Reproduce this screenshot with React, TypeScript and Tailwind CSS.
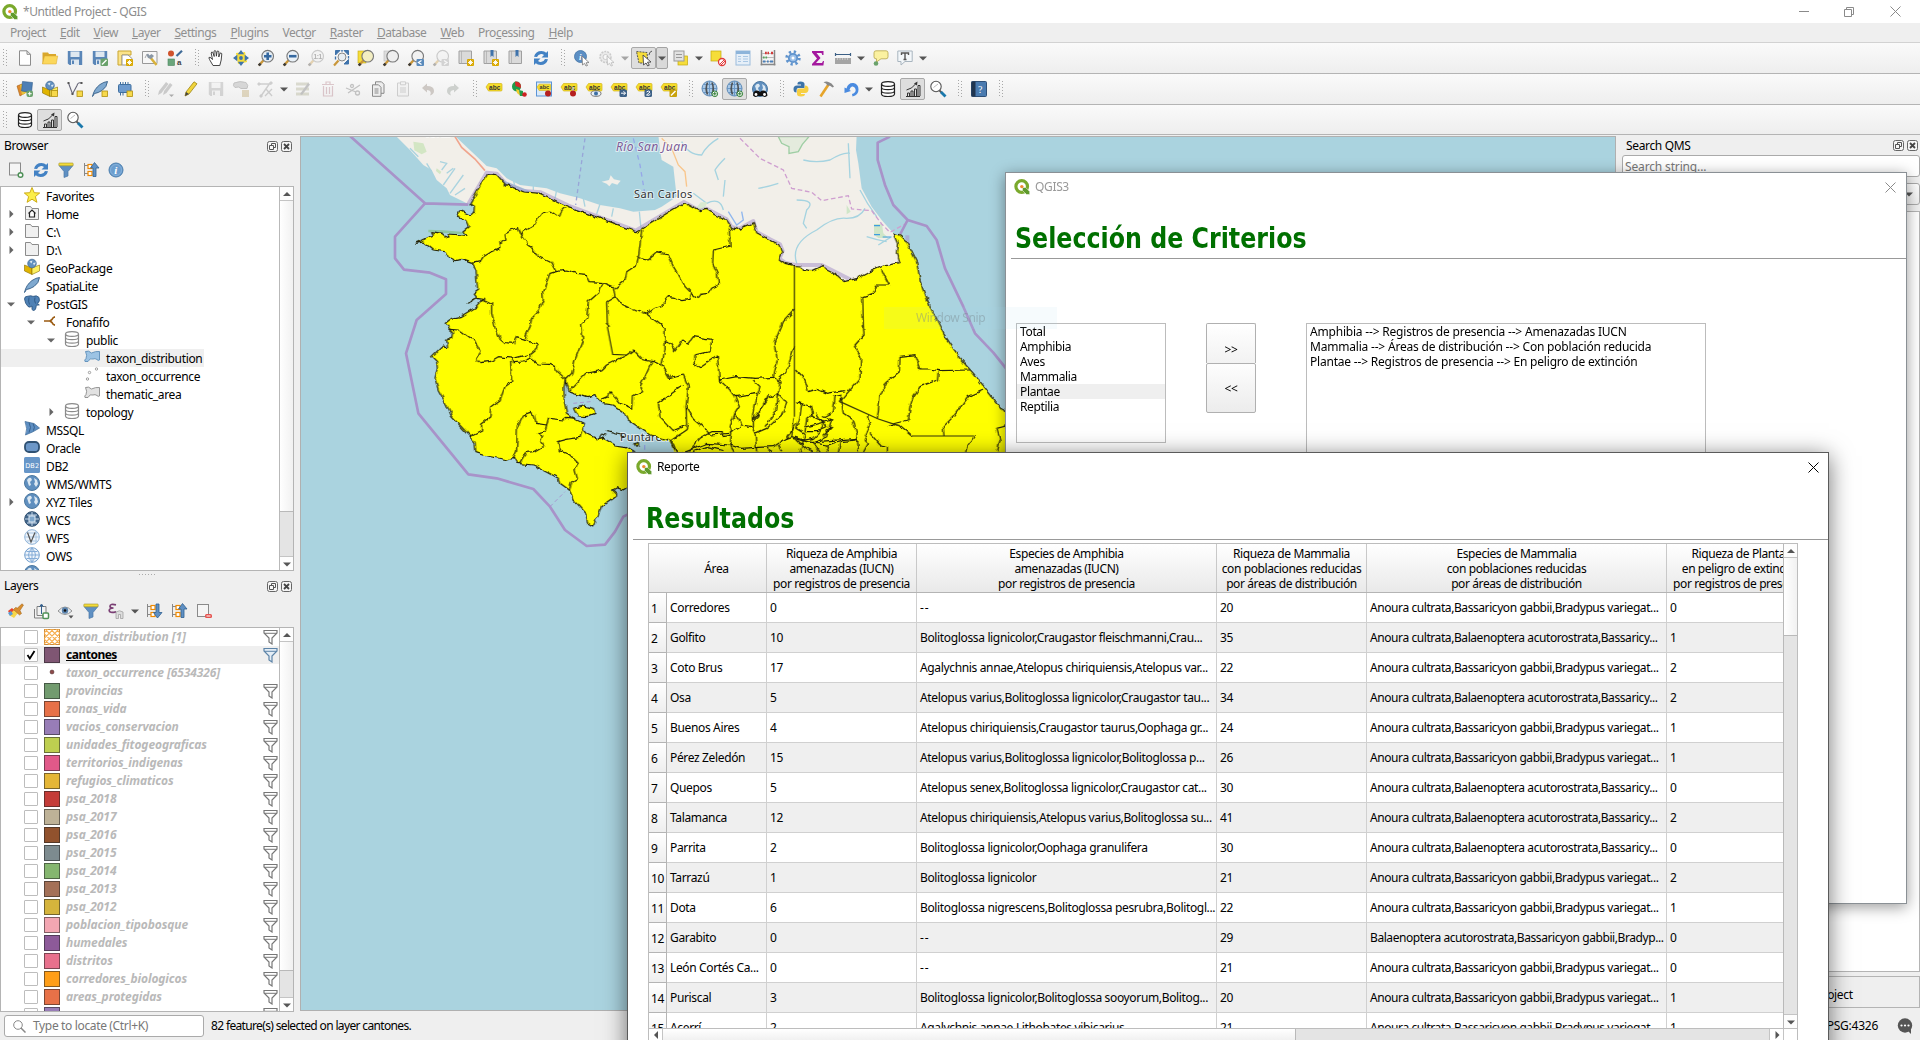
import React from "react";

type IconMap = Record<string, React.ReactNode>;

const badge = (x = 9, y = 9) => (
  <g transform={`translate(${x} ${y})`}>
    <rect width="7" height="7" rx="1" fill="#d9a800" />
    <path d="M3.5 1v5M1 3.5h5M1.8 1.8l3.4 3.4M5.2 1.8L1.8 5.2" stroke="#fff" strokeWidth=".9" />
  </g>
);
const lens = (fill: string, stroke = "#777") => (
  <>
    <path d="M.8 15.5l4.500-5" stroke="#c9973a" strokeWidth="2.4" />
    <path d="M.8 15.5l1.800-2" stroke="#3a3a3a" strokeWidth="2.6" />
    <circle cx="9.700" cy="6.200" r="5.800" fill={fill} stroke={stroke} strokeWidth="1.1" />
  </>
);
const tag = (
  <>
    <path d="M0 6l2.500-3.500H15q1 0 1 1v5.500q0 1-1 1H2.500z" fill="#f6dd2a" stroke="#d2b318" strokeWidth=".7" />
    <text x="3" y="8.600" fontSize="6.500" fontWeight="700" fill="#333" fontFamily="Liberation Sans" textLength="11">abc</text>
  </>
);
const globe = (
  <>
    <circle cx="8" cy="8" r="7.500" fill="#5f8fbf" stroke="#4c789f" />
    <path d="M3 5q2-3 4-2l1 2-2 2 1 3-2 1zM10 3l3 2 1 4-2 3-2-3 1-2z" fill="#dbe8f2" />
  </>
);
const gridGlobe = (
  <>
    <circle cx="7.500" cy="7.500" r="7.500" fill="#a9c9e8" stroke="#5d89b5" />
    <path d="M0 7.500h15M2 3.500h11M2 11.500h11M7.500 0v15" stroke="#6b98c6" fill="none" />
    <path d="M5.500 1.500q-2.500 6 0 12M10 1.500q2.500 6 0 12" stroke="#4d5257" strokeWidth="1.700" fill="none" />
  </>
);
const folder = <path d="M1.500 14.500v-13h5l1.500 2h6.500v11z" fill="#f0f0f0" stroke="#8b8b8b" />;
const cylinder = (c: string) => (
  <g fill="#fff" stroke={c} strokeWidth="1.2">
    <path d="M1.500 3v10q0 2.500 6.500 2.500t6.500-2.500V3" />
    <path d="M1.500 6.500q0 2.200 6.500 2.200t6.500-2.200M1.500 10q0 2.200 6.500 2.200t6.500-2.200" fill="none" />
    <ellipse cx="8" cy="3" rx="6.500" ry="2.400" />
  </g>
);
const redo = (c: string) => (
  <path d="M1 6.800Q2.500 1 8.500 1q3 0 4.700 1.800L15 1v6.500H8.500L11 5Q9.500 3.800 8 4 5 4.300 4 7zM15 9.200Q13.500 15 7.500 15q-3 0-4.700-1.800L1 15V8.500h6.500L5 11q1.500 1.200 3 1 3-.300 4-3z" fill={c} />
);
const save = (c: string, l: string) => (
  <>
    <path d="M.800 1h14.400v14H2.500L.800 13.500z" fill={c} />
    <rect x="3.500" y="1.500" width="9" height="5.500" fill={l} />
    <rect x="4" y="9.500" width="8" height="5.500" fill={l} />
    <rect x="5" y="10.500" width="2" height="3.500" fill={c} />
  </>
);
const quill = (
  <path d="M.5 15.500Q2 8 8 3.500 12 .8 15.500.500 15 6 10 9.500 6 12 2.500 12.500z" fill="#7fa9d0" stroke="#365f88" strokeWidth=".9" />
);
const box = (
  <>
    <path d="M.500 6l7.500 3v6.500L.500 12z" fill="#e0b400" stroke="#8a6d00" strokeWidth=".6" />
    <path d="M15.500 6L8 9v6.500l7.500-3.500z" fill="#fcf060" stroke="#8a6d00" strokeWidth=".6" />
    <circle cx="8" cy="4.500" r="4.300" fill="#5f8fbf" stroke="#3c6590" strokeWidth=".7" />
    <path d="M5.500 2.500l3-1-1 3zM9 4l3-.5-2 3z" fill="#dbe8f2" />
  </>
);
const poly = (f: string, s: string) => (
  <path d="M1.500 2.500q3-1.500 6 1.500 4-2 8-1.500v8.500q-1.500 1-2.500-.5-2-1.500-4-.5-3-1.500-5 2.500H1q-1-1.500 1-3 1.500-3-.500-7z" fill={f} stroke={s} strokeWidth=".9" />
);
const tree = (up: boolean) => (
  <>
    <path d="M1.500 1v13M1.500 3.500H6M1.500 11.500H6" stroke="#888" fill="none" />
    <rect x="5" y="2.500" width="4" height="4" fill="#fff" stroke="#f08a00" strokeWidth="1.200" />
    <rect x="5" y="9.500" width="4" height="4" fill="#fff" stroke="#f08a00" strokeWidth="1.200" />
    {up ? (
      <path d="M11.500.500L16 6h-3v8.500h-3V6H7.500z" fill="#5f90c3" stroke="#2f5f92" strokeWidth=".8" />
    ) : (
      <path d="M11.500 15L16 9.500h-3V1h-3v8.500H7.500z" fill="#5f90c3" stroke="#2f5f92" strokeWidth=".8" />
    )}
  </>
);
const pointer = <path d="M8 6l7 6.500-3 .3 1.500 2.700-1.500.5-1.500-2.700L8.500 15z" fill="#fff" stroke="#777" strokeWidth=".8" />;
const funnelBlue = (
  <>
    <path d="M1 3.500l5 6v6l4-1.500V9.500l5-6z" fill="#5f90c3" stroke="#4a78a8" strokeWidth=".7" />
    <rect x=".8" y="1" width="14.400" height="2.800" rx=".8" fill="#f3dc3a" stroke="#a3922c" strokeWidth=".6" />
  </>
);
const pad = (
  <>
    <path d="M1 1h12.500v12.500H1z" fill="#dadada" stroke="#a0a0a0" />
    <path d="M3.500 1v12.500" stroke="#aaa" strokeWidth=".7" />
  </>
);

const ICONS: IconMap = {
  newfile: <path d="M2.500.8h7.500l3.500 3.500v11h-11zM10 .8v3.500h3.500" fill="#fff" stroke="#8c8c8c" />,
  open: (
    <>
      <path d="M.500 2.500h5.500l1 1.500h7V14H.500z" fill="#d9a72c" />
      <path d="M.500 14l2-8h13.200l-1.500 8z" fill="#fbd75b" stroke="#d9a72c" strokeWidth=".5" />
    </>
  ),
  save: save("#5a86b8", "#dfe8f0"),
  saveas: (
    <>
      {save("#5a86b8", "#dfe8f0")}
      <rect x="8.500" y="8.500" width="7.500" height="7.500" rx="1" fill="#6aa26b" />
      <path d="M10 14.500l4.500-4.500" stroke="#fff" strokeWidth="1.400" />
    </>
  ),
  layout: (
    <>
      <path d="M1 1h13v4H5v10H1z" fill="#fbe38a" stroke="#c9a52e" />
      <path d="M5 5h6l4 3.500V15H5z" fill="#fff" stroke="#999" />
      {badge()}
    </>
  ),
  layoutmgr: (
    <>
      <path d="M.500 1.500h14.500v12H.500z" fill="#f7f7f7" stroke="#999" />
      <path d="M3 8l2-4 3 4" stroke="#aaa" fill="none" />
      <path d="M8 7l6.500 8" stroke="#d9b23a" strokeWidth="2.400" fill="none" />
      <path d="M6 3.500l1.500 2 2-1.500 2.500 2L9 9 6 8 4.500 5z" fill="#8a97a5" />
    </>
  ),
  style: (
    <>
      <circle cx="4" cy="3.500" r="3" fill="#d0532c" />
      <path d="M9.500 6L15 .8" stroke="#3f6b97" strokeWidth="2.200" />
      <rect x="1" y="9" width="6.500" height="6.500" fill="#6aa57b" stroke="#4b8560" strokeWidth=".6" />
      <text x="10" y="15" fontSize="8" fontWeight="700" fill="#444" fontFamily="Liberation Sans">a</text>
    </>
  ),
  pan: (
    <path d="M5 15.500L1.500 9.500Q0 7 2 7.200L4.500 9.500 3.200 3q.3-1.600 1.600-.6L6.200 6.500 6 1.200q.9-1.300 1.900 0l.5 5 .6-4.700q1-1.300 1.900.2l-.1 5.300 1.200-3.700q1.300-1 1.800.5L13.200 10l-1.400 5.500z" fill="#fff" stroke="#333" strokeWidth=".9" />
  ),
  pansel: (
    <>
      <path d="M3 3l9-1 2 10-9 2z" fill="#f6dd3a" />
      <path d="M8 0l3.200 4.300H4.800zM8 16l3.200-4.300H4.800zM0 8l4.300-3.200v6.400zM16 8l-4.300-3.200v6.400z" fill="#3f73ab" />
      <circle cx="8" cy="8" r="1.900" fill="#3f73ab" />
    </>
  ),
  zoomin: (
    <>
      {lens("#e4ecf3")}
      <path d="M9.700 2.500v7.500M6 6.200h7.500" stroke="#3568a0" strokeWidth="2.600" />
    </>
  ),
  zoomout: (
    <>
      {lens("#eaf1f7")}
      <path d="M6 6.200h7.500" stroke="#3568a0" strokeWidth="2.600" />
    </>
  ),
  zoom11: (
    <g opacity=".35">
      {lens("#eee")}
      <text x="5.500" y="9" fontSize="6.500" fontFamily="Liberation Sans" fontWeight="700" fill="#333">1:1</text>
    </g>
  ),
  zoomfull: (
    <>
      <path d="M1 15.500l4.500-5" stroke="#c9973a" strokeWidth="2.200" />
      <circle cx="9" cy="7" r="4" fill="#e8eef3" stroke="#888" />
      <path d="M2.500.500h4.500l-4.500 4.500zM15.500.500H11l4.500 4.500zM15.500 14h-4.500l4.500-4.500z" fill="#3f73ab" stroke="#3f73ab" />
      <path d="M2.500 6.500v3M8 .800h2M15.500 6v2.500" stroke="#3f73ab" strokeWidth="1.300" />
    </>
  ),
  zoomsel: (
    <>
      <rect x="0" y="1" width="8" height="12" fill="#f6dd3a" stroke="#c4a90e" strokeWidth=".6" />
      {lens("#f3eec2")}
    </>
  ),
  zoomlayer: (
    <>
      <rect x="1" y="1" width="8" height="10" fill="#ddd" stroke="#bbb" strokeWidth=".6" />
      {lens("#eeeeee")}
    </>
  ),
  zoomlast: (
    <>
      {lens("#f1f1f1")}
      <rect x="8.500" y="9" width="7.500" height="7" rx="1" fill="#5a8abb" />
      <path d="M13.500 10.500l-3 2 3 2" stroke="#fff" strokeWidth="1.300" fill="none" />
    </>
  ),
  zoomnext: (
    <g opacity=".35">
      {lens("#f1f1f1")}
      <rect x="8.500" y="9" width="7.500" height="7" rx="1" fill="#999" />
      <path d="M11 10.500l3 2-3 2" stroke="#fff" strokeWidth="1.300" fill="none" />
    </g>
  ),
  newmap: (
    <>
      {pad}
      {badge()}
    </>
  ),
  newbm: (
    <>
      {pad}
      <path d="M7.500 0h3v7L9 5.500 7.500 7z" fill="#3f73ab" />
      {badge()}
    </>
  ),
  bm: (
    <>
      {pad}
      <path d="M7.500 0h3v7L9 5.500 7.500 7z" fill="#3f73ab" />
    </>
  ),
  refresh: redo("#4382c4"),
  identify: (
    <>
      <circle cx="6.500" cy="6.500" r="6" fill="#5c8fc4" stroke="#4374a6" strokeWidth=".8" />
      <text x="5" y="10" fontSize="9" fontWeight="700" fontStyle="italic" fontFamily="Liberation Serif" fill="#fff">i</text>
      {pointer}
    </>
  ),
  action: (
    <g opacity=".45">
      <circle cx="6.500" cy="7" r="5.500" fill="#ddd" stroke="#999" strokeDasharray="2 1" strokeWidth="1.500" />
      <circle cx="6.500" cy="7" r="2.500" fill="#fff" stroke="#999" />
      {pointer}
    </g>
  ),
  select: (
    <>
      <path d="M.500 1.500l10.500 1 1 10.500H3z" fill="#f6dd3a" stroke="#555" strokeDasharray="2 1" />
      <path d="M13 5q0-3 3-4" stroke="#555" fill="none" />
      <path d="M7 5l8 7-3.500.2 1.800 3-1.600.8-1.700-3L7.500 15z" fill="#fff" stroke="#444" strokeWidth=".9" />
    </>
  ),
  selform: (
    <>
      <rect x="5" y="6" width="9.500" height="9" fill="#f6dd3a" stroke="#c4a90e" strokeWidth=".7" />
      <rect x="1" y="1" width="10" height="10" fill="#e2e2e2" stroke="#999" />
      <path d="M3 4.500h6M3 7.500h6" stroke="#999" />
    </>
  ),
  desel: (
    <>
      <rect x="1" y="1" width="10" height="10" fill="#f6dd3a" stroke="#c4a90e" strokeWidth=".7" />
      <circle cx="12" cy="12" r="3.500" fill="#fff" stroke="#e03a3a" strokeWidth="1.300" />
      <path d="M9.700 14.300l4.600-4.600M11 15l4-4" stroke="#e03a3a" />
    </>
  ),
  table: (
    <>
      <rect x="1" y="1" width="14" height="14" fill="#e6eff8" stroke="#9bbcdc" />
      <rect x="1" y="1" width="14" height="3" fill="#8db4da" />
      <path d="M3 6.500h3M3 9h3M3 11.500h3M8 6.500h5M8 9h5M8 11.500h5" stroke="#a9c7e4" strokeWidth="1.200" />
    </>
  ),
  abacus: (
    <>
      <path d="M1.500 0v15.500M14.500 0v15.500M.500 14.500h15" stroke="#888" strokeWidth="1.500" />
      <path d="M2 3.500h12M2 7.500h12M2 11.500h12" stroke="#bbb" />
      <path d="M5 3h1.800M7.500 3h1.500M11 3h2" stroke="#d33b3b" strokeWidth="2.400" />
      <path d="M3 7.500h1.600M5.500 7.500h1.600" stroke="#58a55c" strokeWidth="2.200" />
      <path d="M3 11.500h2.500M7 11.500h1.700M10 11.500h3" stroke="#4a7fb8" strokeWidth="2.200" />
    </>
  ),
  gear: (
    <>
      <circle cx="8" cy="8" r="6.200" fill="none" stroke="#5f93cd" strokeWidth="3" strokeDasharray="2.200 2.670" />
      <circle cx="8" cy="8" r="4.200" fill="#9cc0e8" stroke="#5f93cd" strokeWidth="1.800" />
      <circle cx="8" cy="8" r="1.500" fill="#fff" />
    </>
  ),
  sigma: <path d="M2 1h11.500v4h-1.200L11.500 3H6.500l4 5-4.500 5h6l1-2H14l-.6 4.500H2V14l5-5.600L2 2.500z" fill="#a4189e" />,
  measure: (
    <>
      <path d="M0 4.500h16M.5 3v3M15.500 3v3" stroke="#3b5f85" strokeWidth="1.200" />
      <rect x="0" y="8" width="16" height="6" fill="#a5a5a5" />
      <path d="M2.500 8v2M5 8v2M7.500 8v2M10 8v2M12.500 8v2" stroke="#d5d5d5" strokeWidth=".7" />
    </>
  ),
  tip: (
    <>
      <path d="M4 .8h10q2 0 2 2v4q0 2-2 2H9L4.500 12V8.800H4q-2 0-2-2v-4q0-2 2-2z" fill="#fbf1a0" stroke="#b5a44a" strokeWidth=".8" />
      <circle cx="4" cy="13.500" r="2.300" fill="#6aa26b" />
    </>
  ),
  anno: (
    <>
      <path d="M.8 1h14.400v10.500H8L4 15v-3.500H.8z" fill="#f3f7fa" stroke="#a9b5bf" />
      <path d="M4.500 5V3h7v2M8 3v6.500M6.500 9.500h3" stroke="#555" strokeWidth="1.400" fill="none" />
    </>
  ),
  dsm: (
    <>
      <path d="M0 5l5-2 3 9-5 3z" fill="#e08a2c" stroke="#a25c12" strokeWidth=".6" />
      <path d="M3 4l6-2 2 9-6 3z" fill="#e8c23a" />
      <path d="M5.500.500l10 1-1 10-10-1.500z" fill="#4d7fb5" stroke="#2f5c8c" strokeWidth=".6" />
      <rect x="9.500" y="9.500" width="6.500" height="6.500" rx="2" fill="#6aa26b" />
      <path d="M12.700 10.800v3.900M10.800 12.700h3.900" stroke="#fff" />
    </>
  ),
  gpkg: (
    <>
      {box}
      <rect x="9.500" y="9.500" width="6" height="6" fill="#f7d94c" stroke="#b08f10" strokeWidth=".8" />
    </>
  ),
  shp: (
    <>
      <path d="M1.500 2l4 11L10 4.500q1-3.500 4-2.500" stroke="#667" fill="none" strokeWidth="1.100" />
      <path d="M.500 1h2v2h-2zM4.500 12h2v2h-2zM13.500 1h2v2h-2z" fill="#555" />
      <rect x="10" y="10" width="5.500" height="5.500" fill="#f7d94c" stroke="#b08f10" strokeWidth=".8" />
    </>
  ),
  spl: (
    <>
      {quill}
      <rect x="10" y="10" width="5.500" height="5.500" fill="#f7d94c" stroke="#b08f10" strokeWidth=".8" />
    </>
  ),
  mem: (
    <>
      <rect x="1.500" y="3.500" width="12.500" height="8" rx="1" fill="#6c9ace" stroke="#3f6f9f" />
      <path d="M3.500 1v2.500M6 1v2.500M8.500 1v2.500M11 1v2.500M3.500 12v2.500M6 12v2.500" stroke="#3f6f9f" />
      <rect x="10" y="10" width="5.500" height="5.500" fill="#f7d94c" stroke="#b08f10" strokeWidth=".8" />
    </>
  ),
  edits: (
    <g opacity=".45">
      <path d="M0 14l1-4 7-9 2.500 2-7 9zM5 14l1-4 6-8 2.500 2-6 8z" fill="#999" />
      <path d="M11 13.500h5L13.500 16z" fill="#555" />
    </g>
  ),
  pencil: (
    <>
      <path d="M2 15l1-4L11 .8l3 2L6 13z" fill="#f0d43c" stroke="#9d8516" strokeWidth=".8" />
      <path d="M2 15l1-4 3 2z" fill="#444" />
    </>
  ),
  savedis: <g opacity=".35">{save("#999", "#eee")}</g>,
  addpoly: (
    <g opacity=".4">
      <path d="M1 2q6-2.500 12-.5 3 3 1 6H8Q6 5 2 6.500-.500 5 1 2z" fill="#aaa" stroke="#777" />
      <path d="M9 9h7v7H9z" fill="#bfa870" />
    </g>
  ),
  vertex: (
    <g opacity=".3" stroke="#777" fill="none">
      <path d="M1 3h12M3 15L12 2M8 8l6 7M14 8l-7 7" strokeWidth="1.400" />
      <path d="M0 2h2v2H0zM12 1h2v2h-2zM2 14h2v2H2z" fill="#777" />
    </g>
  ),
  multi: (
    <g opacity=".45">
      <path d="M1 1.500h13v3H1zM1 6.500h13v3H1zM1 11.500h13v3H1z" fill="#b9b9a0" />
      <path d="M5 13l8-11 2 1.500-8 10.500z" fill="#888" />
    </g>
  ),
  trash: (
    <g opacity=".3" stroke="#a05a68" fill="none" strokeWidth="1.200">
      <path d="M2 3.500h12M6 3V1h4v2M3.500 5v10h9V5M6.500 6v7M9.500 6v7" />
    </g>
  ),
  cut: (
    <g opacity=".35" stroke="#666" fill="none" strokeWidth="1.300">
      <path d="M1 7l10 4M3 12L15 4" />
      <circle cx="12.500" cy="12" r="2" />
      <circle cx="7" cy="5" r="1.500" />
    </g>
  ),
  copy: (
    <g stroke="#8a8a8a" fill="#eee">
      <path d="M5.500.800h6l2.500 2.500v9H5.500z" />
      <path d="M2.500 3.800h6L11 6.300v9H2.500z" />
      <path d="M4.500 8h4M4.500 10h4M4.500 12h4" />
    </g>
  ),
  paste: (
    <g opacity=".35" stroke="#888" fill="#eee">
      <path d="M2.500 2h11v13h-11z" />
      <path d="M5.500.800h5v3h-5zM5 7h6M5 9h6M5 11h6" />
    </g>
  ),
  undo: <path d="M2 7l5-4.500V5q7 0 7 5 0 3-4 4.500 2.500-5-3-5.500v2.500z" fill="#cdc8c4" />,
  redo: <path d="M14 7L9 2.500V5q-7 0-7 5 0 3 4 4.500Q3.500 9.500 9 9v2.500z" fill="#cdd0cd" />,
  label: tag,
  diagram: (
    <>
      <ellipse cx="5.500" cy="5.500" rx="4.500" ry="5" fill="#1f9c4a" />
      <path d="M4 .500q6.500-.500 6 6.500L4.500 5z" fill="#d62828" />
      <path d="M5 8l3 1 1.500 6-3.500-3z" fill="#f1cc2c" />
      <path d="M8 9l4 1v5H9z" fill="#1f9c4a" />
      <circle cx="13.500" cy="13.500" r="2.300" fill="#c22" />
    </>
  ),
  labelpin: (
    <>
      <rect x=".500" y="1" width="15" height="14" fill="#dbe9f8" stroke="#5b94d6" />
      <g transform="translate(1 1) scale(.85)">{tag}</g>
      <circle cx="12" cy="12.500" r="3" fill="#b52020" />
    </>
  ),
  labelred: (
    <>
      {tag}
      <path d="M12 6v5" stroke="#ccc" strokeWidth="1.500" />
      <circle cx="12" cy="12.500" r="3" fill="#b52020" />
    </>
  ),
  labeleye: (
    <>
      {tag}
      <ellipse cx="10" cy="12.500" rx="5" ry="2.800" fill="#e8f0f8" stroke="#555" strokeWidth=".8" />
      <circle cx="10" cy="12.500" r="2" fill="#3c6ea5" />
    </>
  ),
  labelmove: (
    <>
      {tag}
      <rect x="8.500" y="8.500" width="7.500" height="7.500" rx="1.500" fill="#3d6187" />
      <path d="M10 12.200h4.500M12.500 10.200l2 2-2 2" stroke="#fff" fill="none" />
    </>
  ),
  labelrot: (
    <>
      {tag}
      <rect x="8.500" y="8.500" width="7.500" height="7.500" rx="1.500" fill="#3d6187" />
      <path d="M10.500 11q2-2 3.500 0l-3.500 3q3 1 4-1" stroke="#fff" fill="none" />
    </>
  ),
  labeledit: (
    <>
      {tag}
      <rect x="8.500" y="8.500" width="7.500" height="7.500" rx="1" fill="#c9a30e" />
      <path d="M10 14.500l4.500-4.500" stroke="#fff" strokeWidth="1.500" />
    </>
  ),
  qmsadd: (
    <>
      {gridGlobe}
      <circle cx="12.800" cy="12.800" r="2.800" fill="#fff" stroke="#2e7d32" />
      <path d="M12.800 11v3.600M11 12.800h3.600" stroke="#2e7d32" />
    </>
  ),
  qmssearch: (
    <>
      {globe}
      <path d="M1 14.500q0-5 4-5 2 0 3 1.500 1-1.500 3-1.500 4 0 4.500 5-2 2.500-5 .5H6q-3 2-5-.500z" fill="#111" />
      <circle cx="4" cy="13.500" r="1.400" fill="#fff" />
      <circle cx="12.500" cy="13.500" r="1.400" fill="#fff" />
    </>
  ),
  python: (
    <>
      <path d="M7.500.500q4 0 4 2.500v4H5Q3.500 7 3.500 9.500v2Q.500 11.500.500 8 .500 4.500 4 4.500h4v-1H4.500Q4 .500 7.500.500z" fill="#3c73a8" />
      <path d="M8 15.500q-4 0-4-2.500V9.500q0-2 2-2h4.500Q12 7.500 12 5v-.500q3.500 0 3.500 3.500 0 4-3.500 4H8v1h4q0 2.500-4 2.500z" fill="#f7cf42" />
    </>
  ),
  hammer: (
    <>
      <path d="M2.500 15.500L10.500 3.500" stroke="#e6a42a" strokeWidth="2.600" />
      <path d="M5.500 1.200q3-1.500 5.500 0l2.500 1.300 2.500 3-1.300 1L12 4.800 9.500 4.500 8 2.500z" fill="#888" />
    </>
  ),
  reload: (
    <path d="M1.500 12V6.500l2 1Q5 1.500 10.500 2q5 1 5 6.500 0 5.500-6 7l-.500-2.500q4.500-1.500 3.500-5Q11.500 5 9 5.500 7 6 6.500 9L8 10z" fill="#4a8be0" />
  ),
  db: cylinder("#222"),
  chart: (
    <>
      <path d="M1 15.500h14M2.500 15v-3h2v3M6 15v-5h2v5M9.500 15V8h2v7M13 15V4.500h2V15" stroke="#333" fill="none" />
      <path d="M1.500 9Q7 8 11 2.500" stroke="#333" fill="none" />
      <path d="M9 2.500l3.500-2-.5 4z" fill="#333" />
    </>
  ),
  glass: (
    <>
      <circle cx="6" cy="5.500" r="5.200" fill="#fff" stroke="#555" strokeWidth="1.100" />
      <path d="M9.500 9.500l2 2" stroke="#555" strokeWidth="1.800" />
      <path d="M11 11l4.500 4.500" stroke="#1a78ab" strokeWidth="2.800" />
      <path d="M3.500 6.500L8 3" stroke="#bbb" />
    </>
  ),
  help: (
    <>
      <rect x=".500" y=".500" width="15" height="15" rx="1" fill="#4a7bb0" stroke="#2e5078" />
      <rect x=".500" y=".500" width="4" height="15" fill="#1f3550" />
      <text x="7" y="12" fontSize="10" fontFamily="Liberation Serif" fill="#fff">?</text>
    </>
  ),
  additem: (
    <>
      <rect x="1.500" y="1" width="11" height="12" fill="#f5f5f5" stroke="#8a8a8a" />
      <circle cx="12.500" cy="13" r="2.300" fill="#fff" stroke="#4f9158" strokeWidth="1.500" />
    </>
  ),
  filter: funnelBlue,
  collapse: tree(true),
  expand: tree(false),
  info: (
    <>
      <circle cx="8" cy="8" r="7" fill="#6b9dce" stroke="#4b7eae" />
      <circle cx="8" cy="8" r="5.500" fill="none" stroke="#8fb8de" strokeWidth=".7" />
      <text x="6.200" y="12" fontSize="11" fontWeight="700" fontStyle="italic" fontFamily="Liberation Serif" fill="#fff">i</text>
    </>
  ),
  star: <path d="M8 .500l2.200 5.200 5.500.300-4.300 3.600 1.500 5.700L8 12.200l-4.900 3.100 1.500-5.700L.3 6l5.500-.300z" fill="#fbee4a" stroke="#c8a50a" strokeWidth=".9" />,
  home: (
    <>
      {folder}
      <path d="M4.500 8.500L8 5l3.500 3.500M5.500 8v4h5V8" stroke="#222" fill="#fff" strokeWidth="1.200" />
    </>
  ),
  folder,
  geopackage: box,
  quill,
  elephant: (
    <>
      <path d="M.500 4Q.500 1 4 1.200q3-1 5 .200 4-1.500 6 1 1.500 4-1.500 6l1.800 1.500-3 .300Q12 15.500 9.500 15.500q-2 0-1.500-4.500-2 2-4 .500Q1 8.500.500 4z" fill="#4f81b5" stroke="#27507c" strokeWidth=".8" />
      <path d="M5 2.500q-1 4 .500 7M11 2.500q-1 3 .500 6" stroke="#27507c" strokeWidth=".8" fill="none" />
    </>
  ),
  conn: <path d="M0 8h6M11 3.800Q9 4 8 6.500L6 8l2 1.500q1 2.500 3 2.700" stroke="#9a5a10" strokeWidth="1.700" fill="none" />,
  schema: cylinder("#8a8a8a"),
  polyblue: poly("#9cc3e4", "#5b8db9"),
  polygray: poly("#e2e2e2", "#8a8a8a"),
  points: (
    <g fill="#fff" stroke="#888" strokeWidth=".8">
      <circle cx="3.500" cy="12" r="1.200" />
      <circle cx="5.500" cy="5.500" r="1.200" />
      <circle cx="12.500" cy="2" r="1.200" />
    </g>
  ),
  mssql: (
    <>
      <path d="M1 .500l9 2 5.500 4.500q-6 4-14 7Q4 8 1 .500z" fill="#5d8ec2" stroke="#3c6a98" strokeWidth=".7" />
      <path d="M5 1.500q3 5 0 10M9 2.500q2.500 4 .500 7" stroke="#35618e" fill="none" />
    </>
  ),
  oracle: <rect x="1" y="3" width="14" height="10" rx="4" fill="#6c97c8" stroke="#2f5173" strokeWidth="1.800" />,
  db2: (
    <>
      <rect width="16" height="16" rx="1.500" fill="#6796c8" />
      <text x="1.200" y="10.500" fontSize="6.500" fontFamily="DejaVu Sans" fill="#fff" textLength="13.500">DB2</text>
    </>
  ),
  globe,
  wcs: (
    <>
      <circle cx="8" cy="8" r="7.300" fill="#41658a" stroke="#2e4e6f" />
      <path d="M8 1v14M1 8h14M3 4h10M3 12h10" stroke="#c5d8ea" />
      <rect x="5" y="5" width="6" height="6" fill="#7fa7cc" stroke="#dfeaf4" />
    </>
  ),
  wfs: (
    <>
      <circle cx="8" cy="8" r="7.300" fill="#eef4fb" stroke="#8fb3d8" />
      <path d="M1 8h14M3 4h10M3 12h10M12 2v12" stroke="#a9c6e2" />
      <path d="M3.500 3.500L7 13l4-9.500" stroke="#555" fill="none" strokeWidth="1.200" />
    </>
  ),
  ows: (
    <>
      <circle cx="8" cy="8" r="7.300" fill="#eef4fb" stroke="#6f9dcd" />
      <path d="M8 1v14M1 8h14M2.500 4.500h11M2.500 11.500h11M8 1q-7 7 0 14M8 1q7 7 0 14" stroke="#85add8" fill="none" />
    </>
  ),
  brush: (
    <>
      <path d="M0 8l4-3 3 3-4 5z" fill="#e8432c" />
      <path d="M1 12l5-5 4 3-4 5z" fill="#f7d64a" />
      <path d="M0 10l3-2 2 3-3 2z" fill="#5b9bd5" />
      <path d="M5.500 6.500l6 5.500 2-1.500-1.500-3L15.500 2 14 .800 9.500 5 7.500 4.500z" fill="#d88e2e" stroke="#9b5e14" strokeWidth=".5" />
    </>
  ),
  addgroup: (
    <>
      <path d="M1.500 6v9h9M4 3.500v9h9v-9z" stroke="#808080" fill="#f2f2f2" />
      <path d="M8.500 11V2M6.500 4l2-3 2 3" stroke="#35618e" fill="none" />
      <rect x="10" y="10" width="5.500" height="5.500" rx="1" fill="#fff" stroke="#4f9158" strokeWidth="1.500" />
    </>
  ),
  eye: (
    <>
      <path d="M0 8q7-8 14 0-7 7-14 0z" fill="#e9eef3" stroke="#888" strokeWidth=".9" />
      <circle cx="7" cy="7.500" r="3.200" fill="#5b83ad" />
      <circle cx="7" cy="7.500" r="1.300" fill="#111" />
      <path d="M10.500 12.500h5L13 15.500z" fill="#555" />
    </>
  ),
  epsilon: (
    <>
      <path d="M8 1.800Q2 .500 2 3.200q0 1.800 3.500 1.800Q1.200 5.200 1.200 7.500q0 2.800 6.800 1.300" stroke="#7a3f74" fill="none" strokeWidth="1.700" />
      <path d="M8 9q3.500-2.500 7 0v6.500h-2.500v-4h-2v4H8z" fill="#ddd" stroke="#999" strokeWidth=".7" />
    </>
  ),
  remove: (
    <>
      <rect x="1.500" y="1.500" width="11" height="12" fill="#f5f5f5" stroke="#8a8a8a" />
      <rect x="9" y="11" width="7" height="4" rx="1.500" fill="#e5534f" />
      <path d="M10.500 13h4" stroke="#fff" />
    </>
  ),
};

function Icon({ n, s = 16 }: { n: string; s?: number }) {
  return (
    <svg width={s} height={s} viewBox="0 0 16 16" className="block shrink-0 overflow-visible">
      {ICONS[n]}
    </svg>
  );
}

const Logo = () => (
  <svg width="16" height="16" viewBox="0 0 16 16" className="block shrink-0">
    <circle cx="7.700" cy="7.500" r="5.800" fill="none" stroke="#7aa92c" strokeWidth="3.200" />
    <path d="M8.500 8.500h3.200l4 4V15.500h-3.200l-4-4z" fill="#5f9a2c" stroke="#fff" strokeWidth=".5" />
    <circle cx="7.800" cy="7.600" r="1.700" fill="#ee8a2f" />
  </svg>
);

const Tri = ({ dir = "down", c = "#555" }: { dir?: "down" | "up" | "right" | "left"; c?: string }) => {
  const d = {
    down: "M0 2.500h8L4 6.500z",
    up: "M0 6h8L4 2z",
    right: "M2.500 0v8l4-4z",
    left: "M6 0v8L2 4z",
  }[dir];
  return (
    <svg width="8" height="8" viewBox="0 0 8 8" className="block shrink-0">
      <path d={d} fill={c} />
    </svg>
  );
};

const Grip = () => (
  <svg width="5" height="18" viewBox="0 0 5 18" className="mr-[3px] block shrink-0">
    <path d="M.500 0v18M3.500 1v18" stroke="#a8a8a8" strokeDasharray="1 2" />
  </svg>
);

function Strip({ items, h }: { items: string; h: string }) {
  return (
    <div className={`flex shrink-0 items-center border-b border-[#b4b4b4] bg-linear-to-b from-[#fafafa] to-[#eeeeee] ${h}`}>
      {items.split(" ").map((it, i) => {
        if (it === "|0") return <div key={i} className="flex w-3 shrink-0 justify-end pr-px"><Grip /></div>;
        if (it === "|") return <div key={i} className="flex w-4 shrink-0 justify-end"><Grip /></div>;
        if (it === "v") return <div key={i} className="flex w-3 shrink-0 justify-center"><Tri /></div>;
        if (it === "vd") return <div key={i} className="flex w-3 shrink-0 justify-center"><Tri c="#a5a5a5" /></div>;
        if (it === "V") return <div key={i} className="flex h-[22px] w-3 shrink-0 items-center justify-center rounded-[2px] border border-[#a3a3a3] bg-[#d9d9d9]"><Tri /></div>;
        if (it[0] === "*")
          return (
            <div key={i} className="flex h-[22px] w-[25px] shrink-0 items-center justify-center rounded-[2px] border border-[#a9a9a9] bg-[#dedede]">
              <Icon n={it.slice(1)} />
            </div>
          );
        return <div key={i} className="flex w-[25px] shrink-0 justify-center"><Icon n={it} /></div>;
      })}
    </div>
  );
}

const MENUS = ["Pro|j|ect", "|E|dit", "|V|iew", "|L|ayer", "|S|ettings", "|P|lugins", "Vect|o|r", "|R|aster", "|D|atabase", "|W|eb", "Pro|c|essing", "|H|elp"];

const DockButtons = () => (
  <div className="flex gap-[3px]">
    <svg width="11" height="11" viewBox="0 0 11 11">
      <rect x=".5" y=".5" width="10" height="10" rx="2" fill="#f5f5f5" stroke="#666" />
      <path d="M2.500 4.500h4v4h-4zM4.500 4v-1.500h4v4H7" stroke="#555" fill="none" />
    </svg>
    <svg width="11" height="11" viewBox="0 0 11 11">
      <rect x=".5" y=".5" width="10" height="10" rx="2" fill="#f5f5f5" stroke="#666" />
      <path d="M3 3l5 5M8 3L3 8" stroke="#444" strokeWidth="1.800" />
    </svg>
  </div>
);

function VBar({ thumb }: { thumb: string }) {
  return (
    <div className="flex w-[14px] shrink-0 flex-col border-l border-[#b9b9b9] bg-[#e4e4e4]">
      <div className="flex h-[14px] shrink-0 items-center justify-center border-b border-[#c4c4c4] bg-[#fdfdfd]"><Tri dir="up" /></div>
      <div className={`shrink-0 border-b border-[#b9b9b9] bg-linear-to-r from-white to-[#f1f1f1] ${thumb}`} />
      <div className="flex-1" />
      <div className="flex h-[14px] shrink-0 items-center justify-center border-t border-[#c4c4c4] bg-[#fdfdfd]"><Tri dir="down" /></div>
    </div>
  );
}

type Node = { t: string; ic: string; d?: number; a?: "right" | "down"; sel?: boolean };
const TREE: Node[] = [
  { t: "Favorites", ic: "star" },
  { t: "Home", ic: "home", a: "right" },
  { t: "C:\\", ic: "folder", a: "right" },
  { t: "D:\\", ic: "folder", a: "right" },
  { t: "GeoPackage", ic: "geopackage" },
  { t: "SpatiaLite", ic: "quill" },
  { t: "PostGIS", ic: "elephant", a: "down" },
  { t: "Fonafifo", ic: "conn", d: 1, a: "down" },
  { t: "public", ic: "schema", d: 2, a: "down" },
  { t: "taxon_distribution", ic: "polyblue", d: 3, sel: true },
  { t: "taxon_occurrence", ic: "points", d: 3 },
  { t: "thematic_area", ic: "polygray", d: 3 },
  { t: "topology", ic: "schema", d: 2, a: "right" },
  { t: "MSSQL", ic: "mssql" },
  { t: "Oracle", ic: "oracle" },
  { t: "DB2", ic: "db2" },
  { t: "WMS/WMTS", ic: "globe" },
  { t: "XYZ Tiles", ic: "globe", a: "right" },
  { t: "WCS", ic: "wcs" },
  { t: "WFS", ic: "wfs" },
  { t: "OWS", ic: "ows" },
  { t: "", ic: "globe" },
];
const INDENT = ["pl-[6px]", "pl-[26px]", "pl-[46px]", "pl-[66px]"];

const LAYERS: [string, string][] = [
  ["taxon_distribution [1]", "hatch"],
  ["cantones", "#7f5673"],
  ["taxon_occurrence [6534326]", "dot"],
  ["provincias", "#729b6f"],
  ["zonas_vida", "#e77148"],
  ["vacios_conservacion", "#987db7"],
  ["unidades_fitogeograficas", "#becf50"],
  ["territorios_indigenas", "#e15989"],
  ["refugios_climaticos", "#e5b636"],
  ["psa_2018", "#c43c39"],
  ["psa_2017", "#beb297"],
  ["psa_2016", "#91522d"],
  ["psa_2015", "#7d8b8f"],
  ["psa_2014", "#85b66f"],
  ["psa_2013", "#a47158"],
  ["psa_2012", "#d5b43c"],
  ["poblacion_tipobosque", "#f3a6b2"],
  ["humedales", "#8d5a99"],
  ["distritos", "#e8718d"],
  ["corredores_biologicos", "#ff9e17"],
  ["areas_protegidas", "#e77148"],
  ["", "#987db7"],
];

const Swatch = ({ c }: { c: string }) => (
  <svg width="16" height="16" viewBox="0 0 16 16" className="mr-[6px] block shrink-0">
    {c === "hatch" ? (
      <>
        <rect x=".5" y=".5" width="15" height="15" fill="#fff" stroke="#c98b3c" />
        <path d="M0 4l4-4M0 9.500L9.500 0M0 15L15 0M4.500 16L16 4.500M10 16l6-6M12 0l4 4M6.500 0L16 9.500M1 0l15 15M0 4.500L11.500 16M0 10l6 6" stroke="#f6ad4e" strokeWidth="1.100" />
      </>
    ) : c === "dot" ? (
      <circle cx="8" cy="7" r="2" fill="#8d4a4a" stroke="#4a2a2a" strokeWidth=".5" />
    ) : (
      <>
        <rect width="16" height="16" fill={c} />
        <rect x=".5" y=".5" width="15" height="15" fill="none" stroke="#222" strokeOpacity=".55" />
      </>
    )}
  </svg>
);

const Funnel = ({ on }: { on?: boolean }) => (
  <svg width="15" height="16" viewBox="0 0 15 16" className="block shrink-0">
    <path d="M1 1.500h13v2.500L9 9v6L6 13V9L1 4z" fill={on ? "#e4edf5" : "#fff"} stroke={on ? "#5d84a8" : "#777"} strokeWidth="1.200" />
    <path d="M1.500 4.300h12" stroke={on ? "#5d84a8" : "#777"} />
  </svg>
);

function Browser() {
  return (
    <div className="flex h-[436px] shrink-0 flex-col">
      <div className="flex h-5 items-center justify-between pl-1 pr-0.5"><span>Browser</span><DockButtons /></div>
      <div className="flex h-[30px] items-center gap-[9px] pb-[3px] pl-2">
        <Icon n="additem" /><Icon n="refresh" /><Icon n="filter" /><Icon n="collapse" /><Icon n="info" />
      </div>
      <div className="flex h-[385px] w-[294px] overflow-hidden border border-[#b4b4b4] bg-white">
        <div className="min-w-0 flex-1">
          {TREE.map((n, i) => (
            <div key={i} className={`flex h-[18px] items-center ${INDENT[n.d ?? 0]} ${n.sel ? "w-[203px] bg-[#efefef]" : ""}`}>
              <div className="w-[17px] shrink-0">{n.a && <Tri dir={n.a} c="#666" />}</div>
              <div className="mb-[2px] shrink-0"><Icon n={n.ic} /></div>
              <span className="ml-[6px] pt-[2px] whitespace-nowrap">{n.t}</span>
            </div>
          ))}
        </div>
        <VBar thumb="h-[311px]" />
      </div>
    </div>
  );
}

function Layers() {
  return (
    <div className="flex flex-1 flex-col">
      <div className="flex h-[5px] items-center justify-center">
        <svg width="17" height="3" viewBox="0 0 17 3"><path d="M0 1.500h17" stroke="#aaa" strokeDasharray="1 2" /></svg>
      </div>
      <div className="flex h-[18px] items-center justify-between pl-1 pr-0.5"><span>Layers</span><DockButtons /></div>
      <div className="flex h-[31px] items-center gap-[9px] pl-2">
        <Icon n="brush" /><Icon n="addgroup" /><Icon n="eye" /><Icon n="filter" /><Icon n="epsilon" />
        <div className="-mx-[2px]"><Tri /></div>
        <Icon n="expand" /><Icon n="collapse" /><Icon n="remove" />
      </div>
      <div className="mt-px flex h-[385px] w-[294px] overflow-hidden border border-[#b4b4b4] bg-white">
        <div className="min-w-0 flex-1">
          {LAYERS.map(([t, c], i) => (
            <div key={i} className={`flex h-[18px] items-center pl-[23px] ${i === 1 ? "bg-[#efefef]" : ""}`}>
              <div className="mr-[6px] flex h-[14px] w-[14px] shrink-0 items-center justify-center rounded-[1px] border border-[#bdbdbd] bg-white">
                {i === 1 && <svg width="10" height="10" viewBox="0 0 10 10"><path d="M1.500 5l2.300 3.500L8.500 1" stroke="#000" strokeWidth="1.800" fill="none" /></svg>}
              </div>
              <Swatch c={c} />
              <span className={`flex-1 whitespace-nowrap font-bold ${i === 1 ? "tracking-[-0.5px] text-black underline" : "tracking-[-0.1px] text-[#b9b9b9] italic"}`}>{t}</span>
              {i !== 2 && <div className="mr-px"><Funnel on={i === 1} /></div>}
            </div>
          ))}
        </div>
        <VBar thumb="h-[329px]" />
      </div>
    </div>
  );
}

const LINES_A = [
  "515,400 528,420 533,480 520,490 528,500 508,520 530,505 550,508 530,530 505,545 480,560 455,565 436,580 450,598 458,605 455,625 440,630 443,650 428,648 395,680 410,695 412,715 405,745 415,780 440,825 455,860 510,918 525,940 528,968 560,978 625,990 640,982 650,1000 700,1005 740,1025 775,1045 780,1060 808,1080 822,1110 858,1150 862,1178 878,1188 895,1155 905,1130 948,1100 950,1092 938,1080 950,1073 970,1080 990,1065",
  "515,400 482,388 465,392 445,382 440,366 400,360 370,336 348,340 400,315 395,305 425,310 443,325 445,312 500,316 492,303 508,290 498,270 470,258 483,242 510,255 522,248 523,232 510,222 560,131 590,134 617,164 672,186 722,190 805,230 1007,305 1025,296",
  "1005,965 980,950 945,945 910,925 895,928 860,912 845,895 850,880 830,870 800,850 793,815 792,775 795,750 805,785 860,803 885,797 905,820 940,825 975,850 985,870 1050,915 1110,930",
  "515,400 540,395 550,380 570,368 600,355 598,340 615,330 612,312 630,300 655,293 665,315 670,305 705,285 710,270 725,250 750,243 778,262 785,242 795,232",
  "665,315 685,345 710,375 750,393 768,425 800,420 830,430 860,433 870,455 910,458 940,470 945,500 960,520 1000,540 1040,552",
  "768,425 750,430 728,485 730,510 715,545 695,565 690,590 675,625",
  "550,508 575,520 575,550 585,590 600,625 615,638 640,640 650,620 675,628 712,645 705,660 690,672 640,685 595,680 570,695 540,698 530,685 540,660 525,635 475,600 450,598",
  "690,672 690,688 670,696 640,698 632,685",
  "690,688 715,702 750,703 765,710 770,725 795,748",
  "632,695 635,755 615,770 600,810 572,830 570,860 545,880 545,900 510,918",
  "910,458 895,490 865,515 860,565 845,580 848,630 825,690 815,730 795,750",
  "945,500 920,515 922,580 932,590",
  "980,675 1000,660 1030,690 1060,695 1085,705",
  "808,785 860,730 905,720 920,705 980,675",
  "1025,300 1015,385 1010,405 980,425 975,450 945,475",
  "1055,697 1035,740 1020,770 1028,785 1000,800 998,835 960,820 930,785 925,800 905,808 905,820",
  "640,985 650,960 652,890 670,855 690,847 703,855 708,880 740,885 745,865 790,870 800,862 830,865",
  "740,885 735,903 712,908 728,920 722,935 730,948 700,965 680,967 660,1000",
  "848,890 840,922 800,928 775,935 778,962 810,975 835,1000 825,1020 832,1045 815,1055 808,1080",
  "823,835 850,828 880,835 885,850 860,860 835,858 823,835",
  "918,905 935,908 950,912 975,918",
  "1000,942 1015,938 1016,947 1008,952 1000,942",
  "895,928 905,912 915,915 905,930",
];
const LINES_B = [
  "5,296 132,218 180,245 200,238 225,255 260,270 275,293 298,298 330,285 340,275 350,308 390,330 420,345 428,365 418,388 435,400 465,407 485,408 490,418 515,422 535,413 550,403 560,420 590,435 612,455 650,446 690,425 730,408 780,398 772,370 775,340 762,310 780,315 800,335 830,395 840,450 870,530 910,610 960,685 1000,730 1040,780 1110,868",
  "90,930 98,948 110,967",
  "-5,385 25,390 50,368 85,375 100,410 125,450 135,470 155,490 172,503",
  "172,503 180,493 205,490 215,475 235,465 232,430 218,400 220,360 270,348 268,293",
  "155,490 150,508 125,512 105,502 85,500 65,530 45,535 20,552",
  "20,552 75,595 75,660 65,703",
  "75,635 90,640 105,663 128,630 145,640 160,620 215,628 210,665 165,675 162,700 180,710 232,675 238,750 290,740 345,745 400,742 420,755",
  "65,703 90,745 130,735 145,770 138,830 160,865 190,890 210,915 270,910",
  "130,765 55,820 60,860 100,902 140,885 138,830",
  "463,860 455,920",
  "463,540 430,575 402,640 412,690 400,742",
  "463,648 450,690 440,725 415,750",
  "466,720 495,750 505,785 530,778 560,790 615,782",
  "605,795 585,800 580,845 550,860",
  "725,418 735,440 748,465 710,465 700,490 668,500 670,590 672,615 645,645 662,685 660,745 600,815",
  "775,885 815,918",
  "1003,918 985,945 980,967",
  "712,865 720,800 740,755 778,725 780,682 828,677 842,717 870,717 895,722 990,720",
  "895,722 892,750 840,770 820,800 810,830 805,870 745,885 775,885",
  "1030,780 985,800 940,860 910,890 912,918",
  "1110,885 1070,895 1080,930 1072,967",
  "238,750 265,775 285,800 350,790",
  "340,750 360,770 350,800 340,860 340,890",
  "285,800 298,830 285,850 270,890 275,905 270,950 280,967",
  "285,850 305,880 300,890 275,905",
  "305,885 335,890 345,910",
  "420,755 415,790 375,810 345,870",
  "385,795 380,810 340,870",
  "415,790 440,820 425,855 380,895 345,910 350,967",
  "415,790 410,840 375,890",
  "110,967 95,930 140,900 145,885",
  "145,965 180,925 215,905 250,905 250,920 275,915",
  "130,967 200,940 270,945 300,955 400,950 440,925 455,920",
  "160,965 200,950 250,962",
  "440,925 460,895 470,880",
  "466,815 485,820 480,860 470,895 495,910 490,930 455,920",
  "485,820 515,830 520,850 500,865 495,905",
  "510,830 515,855 545,870 560,890 530,905 500,905",
  "530,850 550,880 540,905 520,925 490,930",
  "550,860 575,870 560,920 530,935 655,925",
  "603,800 610,850 640,870 652,920 655,967",
  "460,925 500,935 560,945 600,935 655,930",
  "490,930 480,967",
  "520,935 540,967",
  "560,945 565,967",
  "600,938 595,967",
  "470,930 500,955 520,967",
  "682,855 690,885 675,920 685,940 670,967",
  "690,910 720,945 742,950 742,967",
  "380,955 400,967",
  "415,945 425,967",
  "575,870 500,890",
  "560,900 575,895 550,920",
];

const MapCanvas = () => (
  <svg width="1314" height="873" viewBox="301 137 1314 873" className="block">
    <defs>
      <filter id="soft"><feGaussianBlur stdDeviation="0.35" /></filter>
      <filter id="coast" x="300" y="130" width="720" height="420" filterUnits="userSpaceOnUse" colorInterpolationFilters="sRGB">
        <feTurbulence type="fractalNoise" baseFrequency="0.14" numOctaves="2" seed="4" result="n" />
        <feDisplacementMap in="SourceGraphic" in2="n" scale="5" xChannelSelector="R" yChannelSelector="G" />
      </filter>
    </defs>
    <rect x="301" y="137" width="1314" height="873" fill="#aad3df" />
    <g transform="translate(300 130) scale(.33333)" filter="url(#soft)">
      <path d="M285 15L330 60 370 105 395 120 410 150 440 175 450 195 505 222 560 160 560 131 1007 310 1120 250 1400 440 1800 470 1800 330 1780 310 1745 270 1715 230 1685 175 1675 100 1668 60 1670 15H1075L1080 60 1085 90 1120 110 1130 200 1085 230 1065 240 1000 245 960 235 900 225 840 205 780 190 740 175 660 165 620 145 590 115 560 108 520 70 465 18z" fill="#f2efe9" />
      <path d="M340 35l30 5 10 25-15 8-22-12zM410 115l14 10-4 8-12-10z" fill="#d3e6c4" />
      <path d="M465 20l20 32 40 35 30 35" stroke="#f0a58e" strokeWidth="5" fill="none" />
      <path d="M905 155l22-5 5-14 10 12 20 4-10 12-16-5-8 10-8-8z" fill="#f2efe9" />
      <path d="M330 55l25 25M380 100l15 25M420 95l20 5-15 20M440 130l20-15M430 165l35-50M450 190l40-55M465 195l30-20M640 150l5 20M700 165v15M770 180l-5 25M850 205l5 25M900 222l-10 30M940 235l-5 25M1018 245l5 50" stroke="#aad3df" strokeWidth="4" fill="none" />
      <path d="M1145 35q20 40 60 40 15-30 50-50M1275 85q-20 20-30 35l10 30M1510 90q40 10 80 0 40-25 60-20M1645 40l5 105M1490 210q60 0 30 30l-10 40 10 15M1490 400q-20-60 60-100 50-40 90-35 40 0 55-30M1680 180q20 40 50 80M1735 345l40-25M1180 190l40 30q40-20 50 20M1275 150l-5 50M1375 175q30-5 60-15M1700 320q30 10 60 15" stroke="#a5d3e0" strokeWidth="4" fill="none" />
      <path d="M1435 20l10 20 22 10v20l28-5 12-22 20-23z" fill="#e4ebdd" stroke="#9fcea4" strokeWidth="4" />
      <path d="M1722 282h24l4 28 15 14h-30l-13-10zM1640 225l12 20-12 8z" fill="#cfe6c8" />
      <path d="M1722 287h18M1722 314h18M1748 321h24" stroke="#3e9ee0" strokeWidth="3.500" />
      <path d="M1180 245l30 0 12-28-20 0z" fill="#d9ead0" />
      <path d="M1285 245l25 40 20-15-5-25" stroke="#8fb6ee" strokeWidth="4" fill="none" />
      <path d="M1085 25l30 30 20 50 20 20 5 45" stroke="#f9c68c" strokeWidth="4" fill="none" />
      <path d="M1320 25l60 60 70 35 25 55 60 12 30 25 80-15 10 40 60 5 30 40 25 25 45-25" stroke="#cf9fd0" strokeWidth="4" strokeDasharray="14 8" fill="none" />
      <path d="M855 25l-10 70-18 130" stroke="#98a6d8" strokeWidth="4" strokeDasharray="12 10" fill="none" />
      <path d="M1000 25l20 80 15 90M1034 945v20" stroke="#96a8e8" strokeWidth="4" strokeDasharray="14 12" fill="none" />
      <path d="M820 820l60-6M750 1130l45-45M820 880h30" stroke="#a79ad0" strokeWidth="3" strokeDasharray="12 8" fill="none" />
      <g fill="none" stroke="#a893c9" strokeWidth="8" strokeLinejoin="round">
        <path d="M150 18L375 220l130 4M375 220l-90 100v65l27 34 78 9 48 20v44l-88 78-32 100 37 180 150 183 85 12 110 32 50 53 45 70 65 48 55-4 30-39 25-45 40-20" />
        <path d="M1770 20l-37 18v52l22 75 25 60 43 45-22 42M1823 270l57 18 30 42 25 85 55 115 35 80 55 58 60 75" />
      </g>
      <g fill="none" stroke="#a893c9" strokeWidth="12" strokeOpacity=".55" strokeLinejoin="round">
        <path d="M505 222L560 128l30 3 27 30 55 22 50 4 83 40 202 75 145-86 48 27 20-7 60 32 15 23 23 5 42-23 10 33 40 22 30 15 8 20-10 23 17 12 30 7 80 0 95 48 40-9 40-21 40-17 50-10-8-60 0-20" />
      </g>
      <path d="M385 303l45 2 60 5 10-10" stroke="#8fc7a0" strokeWidth="8" fill="none" />
    </g>
    <g fontFamily="Noto Sans, sans-serif" stroke="#fff" strokeOpacity=".6" strokeWidth="2" paintOrder="stroke">
      <text x="616" y="151" fill="#7c5c98" fontSize="12" fontStyle="italic" textLength="71">Río San Juan</text>
      <text x="634" y="198" fill="#333" fontSize="11" textLength="58">San Carlos</text>
      <text x="620" y="441" fill="#333" fontSize="11" textLength="60">Puntarenas</text>
      <text x="426" y="137" fill="#7c5c98" fontSize="11">Rivas</text>
    </g>
    <g filter="url(#coast)">
      <g fill="#ffff00">
        <path
          transform="translate(300 130) scale(.33333)"
          d="M560 131L590 134 617 164 672 186 722 190 805 230 1007 305 1025 296 1130 240 1130 960 1110 935 1050 915 985 870 975 850 940 825 905 820 885 797 860 803 805 785 795 750 792 775 793 815 800 850 830 870 850 880 845 895 860 912 895 928 910 925 945 945 980 950 1005 970H990V1065L970 1080 950 1073 938 1080 950 1092 948 1100 905 1130 895 1155 878 1188 862 1178 858 1150 822 1110 808 1080 780 1060 775 1045 740 1025 700 1005 650 1000 640 982 625 990 560 978 528 968 525 940 510 918 455 860 440 825 415 780 405 745 412 715 410 695 395 680 428 648 443 650 440 630 455 625 458 605 450 598 436 580 455 565 480 560 530 530 550 508 530 505 508 520 528 500 520 490 533 480 528 420 515 400 482 388 465 392 445 382 440 366 400 360 370 336 348 340 400 315 395 305 425 310 443 325 445 312 500 316 492 303 508 290 498 270 470 258 483 242 510 255 522 248 523 232 510 222z"
        />
        <path
          transform="translate(640 130) scale(.33333)"
          d="M5 296L132 218 180 245 200 238 225 255 260 270 275 293 298 298 330 285 340 275 350 308 390 330 420 345 428 365 418 388 435 400 465 407 485 408 490 418 515 422 535 413 550 403 560 420 590 435 612 455 650 446 690 425 730 408 780 398 772 370 775 340 762 310 780 315 800 335 830 395 840 450 870 530 910 610 960 685 1000 730 1040 780 1110 868V1000H115L90 930 30 915 5 890z"
        />
        <g transform="translate(300 130) scale(.33333)">
          <path d="M823 835L850 828 880 835 885 850 860 860 835 858z" />
          <path d="M1000 942l15-4 1 9-8 5z" />
        </g>
      </g>
      <g fill="none" stroke="#22220a" strokeWidth="3.600" strokeLinejoin="round">
        <g transform="translate(300 130) scale(.33333)">
          {LINES_A.map((p, i) => <path key={i} d={"M" + p} />)}
        </g>
        <g transform="translate(640 130) scale(.33333)">
          {LINES_B.map((p, i) => <path key={i} d={"M" + p} />)}
        </g>
      </g>
    </g>
    <path
      transform="translate(640 130) scale(.33333)"
      d="M463 407V860M600 815L715 867 775 887M815 918H1003M-98 590L-82 673-40 675"
      fill="none"
      stroke="#33330a"
      strokeWidth="3.600"
    />
  </svg>
);

const Close = ({ c }: { c: string }) => (
  <svg width="11" height="11" viewBox="0 0 11 11" className="block"><path d="M.500.500l10 10M10.500.500l-10 10" stroke={c} /></svg>
);

const Heading = ({ children }: { children: string }) => (
  <h1 className="origin-left scale-x-[0.848] font-['DejaVu_Sans'] text-[28px] leading-9 font-bold tracking-normal whitespace-nowrap text-[#007000]">{children}</h1>
);

const Criteria = () => (
  <div className="absolute left-[1005px] top-[172px] flex h-[732px] w-[902px] flex-col border border-[#8a9095] bg-white shadow-[0_3px_14px_rgba(0,0,0,0.4)]">
    <div className="flex h-[28px] items-center pl-2 pr-[10px] text-[#999]">
      <Logo /><span className="ml-[5px] flex-1">QGIS3</span><Close c="#8a8a8a" />
    </div>
    <div className="ml-[5px] flex h-[58px] items-end border-b border-[#999] pb-px pl-[4px]">
      <Heading>Selección de Criterios</Heading>
    </div>
    <div className="mt-[64px] flex pl-[10px] leading-[15px]">
      <div className="h-[120px] w-[150px] border border-[#bcbcbc]">
        {["Total", "Amphibia", "Aves", "Mammalia", "Plantae", "Reptilia"].map((t) => (
          <div key={t} className={`h-[15px] pl-[3px] ${t === "Plantae" ? "bg-[#efefef]" : ""}`}>{t}</div>
        ))}
      </div>
      <div className="ml-10 w-[50px]">
        <div className="flex h-10 items-center justify-center rounded-t-[2px] border border-b-0 border-[#b0b0b0] bg-linear-to-b from-white to-[#f2f2f2] pt-3">&gt;&gt;</div>
        <div className="flex h-[50px] items-center justify-center rounded-[2px] border border-[#b0b0b0] bg-linear-to-b from-[#fdfdfd] to-[#ececec] pt-px">&lt;&lt;</div>
      </div>
      <div className="ml-[50px] h-[200px] w-[400px] border border-[#bcbcbc] pl-[3px] tracking-[-0.2px] whitespace-nowrap">
        <div>Amphibia --&gt; Registros de presencia --&gt; Amenazadas IUCN</div>
        <div>Mammalia --&gt; Áreas de distribución --&gt; Con población reducida</div>
        <div>Plantae --&gt; Registros de presencia --&gt; En peligro de extinción</div>
      </div>
    </div>
  </div>
);

const A1 = "Anoura cultrata,Bassaricyon gabbii,Bradypus variegat...";
const A2 = "Anoura cultrata,Balaenoptera acutorostrata,Bassaricy...";
const A3 = "Balaenoptera acutorostrata,Bassaricyon gabbii,Bradyp...";
const ROWS = [
  ["Corredores", "0", "--", "20", A1, "0"],
  ["Golfito", "10", "Bolitoglossa lignicolor,Craugastor fleischmanni,Crau...", "35", A2, "1"],
  ["Coto Brus", "17", "Agalychnis annae,Atelopus chiriquiensis,Atelopus var...", "22", A1, "2"],
  ["Osa", "5", "Atelopus varius,Bolitoglossa lignicolor,Craugastor tau...", "34", A2, "2"],
  ["Buenos Aires", "4", "Atelopus chiriquiensis,Craugastor taurus,Oophaga gr...", "24", A1, "1"],
  ["Pérez Zeledón", "15", "Atelopus varius,Bolitoglossa lignicolor,Bolitoglossa p...", "26", A1, "1"],
  ["Quepos", "5", "Atelopus senex,Bolitoglossa lignicolor,Craugastor cat...", "30", A2, "0"],
  ["Talamanca", "12", "Atelopus chiriquiensis,Atelopus varius,Bolitoglossa su...", "41", A2, "2"],
  ["Parrita", "2", "Bolitoglossa lignicolor,Oophaga granulifera", "30", A2, "0"],
  ["Tarrazú", "1", "Bolitoglossa lignicolor", "21", A1, "2"],
  ["Dota", "6", "Bolitoglossa nigrescens,Bolitoglossa pesrubra,Bolitogl...", "22", A1, "1"],
  ["Garabito", "0", "--", "29", A3, "0"],
  ["León Cortés Ca...", "0", "--", "21", A1, "0"],
  ["Puriscal", "3", "Bolitoglossa lignicolor,Bolitoglossa sooyorum,Bolitog...", "20", A1, "1"],
  ["Acerrí", "2", "Agalychnis annae,Lithobates vibicarius", "21", A1, "1"],
];
const COLS = "grid grid-cols-[18px_100px_150px_300px_150px_300px_150px]";
const HEADS = [
  ["Riqueza de Amphibia", "amenazadas (IUCN)", "por registros de presencia"],
  ["Especies de Amphibia", "amenazadas (IUCN)", "por registros de presencia"],
  ["Riqueza de Mammalia", "con poblaciones reducidas", "por áreas de distribución"],
  ["Especies de Mammalia", "con poblaciones reducidas", "por áreas de distribución"],
  ["Riqueza de Plantae", "en peligro de extinción", "por registros de presencia"],
];

const Report = () => (
  <div className="absolute left-[627px] top-[452px] flex h-[620px] w-[1202px] flex-col border border-[#5a5a5a] bg-white shadow-[0_4px_22px_rgba(0,0,0,0.55)]">
    <div className="flex h-[28px] items-center pl-2 pr-[9px] text-black">
      <Logo /><span className="ml-[5px] flex-1">Reporte</span><Close c="#000" />
    </div>
    <div className="ml-[5px] flex h-[59px] items-end border-b border-[#999] pb-0.5 pl-[13px]">
      <Heading>Resultados</Heading>
    </div>
    <div className="mt-[3px] ml-5 flex h-[498px] w-[1150px] flex-col overflow-hidden border border-[#bdbdbd]">
      <div className="flex h-[484px] shrink-0">
        <div className="w-[1134px] overflow-hidden">
          <div className={`${COLS} h-[49px] border-b border-[#b4b4b4] bg-linear-to-b from-white to-[#e9e9e9]`}>
            <div />
            <div className="flex items-center justify-center border-r border-[#c9c9c9] pt-0.5">Área</div>
            {HEADS.map((h, i) => (
              <div key={i} className="overflow-hidden border-r border-[#c9c9c9] pt-[2px] text-center leading-[15px] tracking-[-0.4px] whitespace-nowrap">
                {h.map((l) => <div key={l}>{l}</div>)}
              </div>
            ))}
          </div>
          {ROWS.map((r, i) => (
            <div key={i} className={`${COLS} h-[30px] ${i % 2 ? "bg-[#efefef]" : "bg-white"}`}>
              <div className="flex items-center border-r border-b border-[#b4b4b4] bg-linear-to-b from-white to-[#eeeeee] pt-0.5 pl-0.5">{i + 1}</div>
              {r.map((c, j) => (
                <div key={j} className={`flex items-center overflow-hidden border-r border-b border-[#d0d0d0] pl-[3px] whitespace-nowrap ${c === "--" ? "tracking-[0.8px]" : j === 4 ? "tracking-[-0.42px]" : ""}`}>{c}</div>
              ))}
            </div>
          ))}
        </div>
        <VBar thumb="h-[78px]" />
      </div>
      <div className="flex h-[14px] border-t border-[#bdbdbd] bg-[#e4e4e4]">
        <div className="flex w-[14px] items-center justify-center border-r border-[#c4c4c4] bg-white"><Tri dir="left" /></div>
        <div className="w-[633px] border-r border-[#b9b9b9] bg-linear-to-b from-white to-[#f1f1f1]" />
        <div className="flex-1" />
        <div className="flex w-[14px] items-center justify-center border-l border-[#c4c4c4] bg-white"><Tri dir="right" /></div>
        <div className="w-[14px] border-l border-[#c4c4c4] bg-white" />
      </div>
    </div>
  </div>
);

export default function App() {
  return (
    <div className="relative flex h-[1040px] w-[1920px] flex-col overflow-hidden bg-[#efefef] font-['Noto_Sans',sans-serif] text-[12px] leading-4 tracking-[-0.35px] text-black">
      <div className="flex h-[23px] shrink-0 items-center bg-white pl-[2px] text-[#8d8d8d]">
        <Logo />
        <span className="ml-[5px] flex-1 tracking-[-0.4px]">*Untitled Project - QGIS</span>
        <svg width="120" height="12" viewBox="0 0 120 12" className="mr-[6px]" fill="none" stroke="#8a8a8a">
          <path d="M5 5.500h10M50.500 3.500h7v7h-7zM52.500 3.500v-2h7v7h-2M96.500 .5l10 10M106.500.500l-10 10" />
        </svg>
      </div>
      <div className="flex h-5 shrink-0 items-center gap-[14px] border-b border-[#d2d2d2] pl-[10px] tracking-[-0.47px] text-[#909090]">
        {MENUS.map((m) => {
          const [a, u, b] = m.split("|");
          return <span key={m} className="whitespace-nowrap">{a}<u>{u}</u>{b}</span>;
        })}
      </div>
      <Strip h="h-[31px]" items="|0 newfile open save saveas layout layoutmgr style | pan pansel zoomin zoomout zoom11 zoomfull zoomsel zoomlayer zoomlast zoomnext newmap newbm bm refresh | identify action vd *select V selform v desel table abacus gear sigma measure v tip anno v" />
      <Strip h="h-[31px]" items="|0 dsm gpkg shp spl mem | edits pencil savedis addpoly vertex v multi trash cut copy paste undo redo | label diagram labelpin labelred labeleye labelmove labelrot labeledit | qmsadd *qmsadd qmssearch | python hammer reload v db *chart glass | help |" />
      <Strip h="h-[30px]" items="|0 db *chart glass" />
      <div className="flex min-h-0 flex-1">
        <div className="flex w-[300px] shrink-0 flex-col">
          <div className="h-px" />
          <div className="flex w-[294px] flex-1 flex-col"><Browser /><Layers /></div>
        </div>
        <div className="mt-px h-[875px] w-[1316px] shrink-0 border border-[#b0b0b0]"><MapCanvas /></div>
        <div className="flex h-[873px] flex-1 flex-col pl-[6px]">
          <div className="flex h-[20px] items-center justify-between pt-px pr-0.5 pl-1"><span>Search QMS</span><DockButtons /></div>
          <div className="flex h-[22px] w-[298px] items-center rounded-[3px] border border-[#aaa] bg-white pt-0.5 pl-0.5 tracking-[-0.15px] text-[#777]">Search string...</div>
          <div className="mt-[6px] flex h-[22px] w-[298px] items-center justify-end rounded-[3px] border border-[#aaa] bg-linear-to-b from-white to-[#eee] pr-[6px]"><Tri /></div>
          <div className="mt-[6px] h-[761px] w-[298px] shrink-0 border border-[#b4b4b4] bg-white" />
          <div className="mt-1 flex h-8 w-[298px] shrink-0 items-center border border-[#b4b4b4] pt-1.5 pl-[155px]">Add to project</div>
        </div>
      </div>
      <div className="absolute top-[1012px] left-0 flex h-7 w-full items-center pl-1">
        <div className="flex h-[22px] w-[200px] items-center rounded-[3px] border border-[#aaa] bg-white pl-2 text-[#777]">
          <svg width="13" height="13" viewBox="0 0 13 13"><circle cx="5" cy="5" r="4.300" fill="none" stroke="#888" /><path d="M8 8l4.500 4.500" stroke="#888" strokeWidth="1.500" /></svg>
          <span className="ml-[7px]">Type to locate (Ctrl+K)</span>
        </div>
        <span className="ml-[7px] flex-1 tracking-[-0.65px]">82 feature(s) selected on layer cantones.</span>
        <span className="tracking-[-0.25px]">EPSG:4326</span>
        <svg width="16" height="16" viewBox="0 0 16 16" className="mr-[7px] ml-[19px]">
          <circle cx="8" cy="7.500" r="7.200" fill="#555" />
          <path d="M10 12l4 4v-5z" fill="#555" />
          <circle cx="4.500" cy="7.500" r="1.100" fill="#fff" /><circle cx="8" cy="7.500" r="1.100" fill="#fff" /><circle cx="11.500" cy="7.500" r="1.100" fill="#fff" />
        </svg>
      </div>
      <Criteria />
      <div className="absolute top-[307px] left-[884px] h-[22px] w-[173px] bg-[#a8d8f0]/10 pt-[3px] pl-8 text-[#7a8a90]/45">Window Snip</div>
      <Report />
    </div>
  );
}
